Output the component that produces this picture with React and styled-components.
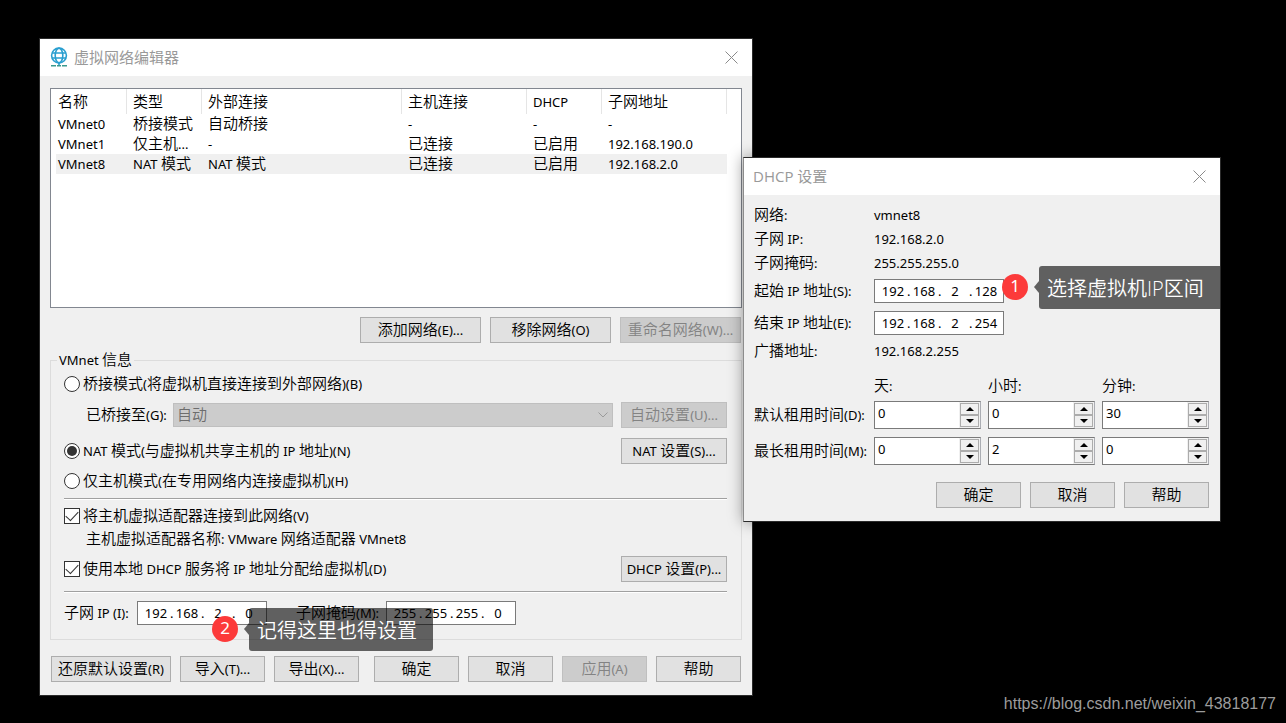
import * as React from 'react'
import styled, { createGlobalStyle, css } from 'styled-components'

const GlobalStyle = createGlobalStyle`
  * {
    box-sizing: border-box;
  }
  body {
    margin: 0;
    background: #000;
  }
  body, button, input, select {
    font-family: 'Noto Sans', 'Noto Sans CJK SC', sans-serif;
    font-size: 13px;
    line-height: 20px;
    color: #000;
  }
`

const Desktop = styled.main`
  position: relative;
  min-height: 100vh;
  overflow: hidden;
  background: #000;
`

const Window = styled.section`
  position: absolute;
  left: ${p => p.$left}px;
  top: ${p => p.$top}px;
  width: ${p => p.$width}px;
  border: 1px solid #2b2b2b;
  background: #f0f0f0;
  ${p =>
    p.$raised &&
    css`
      border-left-color: #8c8c8c;
      box-shadow: 0 0 14px rgba(0, 0, 0, 0.4);
    `};
`

const TitleBar = styled.header`
  display: flex;
  align-items: center;
  gap: 6px;
  height: 37px;
  padding: 0 14px 1px 9px;
  background: #fff;
`

const Title = styled.h1`
  flex: 1;
  margin: 0;
  font-family: 'Open Sans', 'Noto Sans CJK SC', sans-serif;
  font-size: 15px;
  font-weight: 400;
  line-height: 18px;
  color: #999;
`

const CloseButton = styled.button`
  display: flex;
  padding: 0;
  border: 0;
  background: none;
`

const Body = styled.div`
  display: flex;
  flex-direction: column;
  padding: ${p => p.$padding};
`

// Chinese runs are set a little larger than the latin interface font
const Han = styled.span`
  font-family: 'Noto Sans CJK SC', sans-serif;
  font-size: 15px;
  font-weight: 350;
  line-height: 1;
`

const Line = styled.span`
  white-space: pre;
`

const Text = ({ children }) => (
  <Line>
    {children
      .split(/([\u4e00-\u9fff]+)/)
      .map((part, i) => (i % 2 ? <Han key={i}>{part}</Han> : part))}
  </Line>
)

const Button = styled.button`
  display: flex;
  align-items: center;
  justify-content: center;
  flex: none;
  width: ${p => p.$width || 85}px;
  height: 26px;
  padding: 0;
  border: 1px solid #adadad;
  background: #e1e1e1;
  &:disabled {
    border-color: #bfbfbf;
    background: #ccc;
    color: #838383;
  }
`

const ButtonRow = styled.div`
  display: flex;
  justify-content: flex-end;
  gap: 9px;
  padding: 0 1px;
  margin-top: ${p => p.$top}px;
`

const ButtonGroup = styled.div`
  display: flex;
  gap: 9px;
  margin-right: auto;
`

const ListBox = styled.div`
  height: 220px;
  border: 1px solid #828790;
  background: #fff;
`

const Table = styled.table`
  width: 671px;
  margin-left: 5px;
  table-layout: fixed;
  border-collapse: separate;
  border-spacing: 0;
`

const HeadCell = styled.th`
  width: ${p => p.$width}px;
  height: 25px;
  padding: 0 0 0 6px;
  border-right: 1px solid #e5e5e5;
  text-align: left;
  font-weight: 400;
  line-height: 20px;
  &:first-child {
    padding-left: 2px;
  }
`

const Cell = styled.td`
  height: 20px;
  padding: 0 0 0 6px;
  line-height: 20px;
  white-space: nowrap;
  &:first-child {
    padding-left: 2px;
  }
`

const TableRow = styled.tr`
  background: ${p => (p.$selected ? '#f0f0f0' : 'transparent')};
`

const Group = styled.fieldset`
  min-width: 0;
  margin: 7px 0 0;
  padding: 0 14px 14px 13px;
  border: 1px solid #dcdcdc;
`

const Legend = styled.legend`
  height: 20px;
  margin-left: -7px;
  padding: 0 2px;
`

const Row = styled.div`
  display: flex;
  align-items: center;
  height: ${p => p.$height || 26}px;
  margin-top: ${p => p.$top || 0}px;
  padding-left: ${p => p.$indent || 0}px;
`

const FieldName = styled.span`
  width: ${p => p.$width}px;
  margin-left: ${p => p.$left || 0}px;
`

const Spacer = styled.div`
  flex: 1;
`

const Rule = styled.hr`
  height: 2px;
  margin: ${p => p.$top}px 0 0;
  border: 0;
  border-top: 1px solid #a0a0a0;
  background: #fff;
`

const Choice = styled.label`
  display: flex;
  align-items: center;
  gap: 3px;
`

const Radio = styled.input.attrs({ type: 'radio' })`
  appearance: none;
  display: grid;
  place-items: center;
  width: 16px;
  height: 16px;
  margin: 0;
  border: 1px solid #333;
  border-radius: 50%;
  background: #fff;
  &:checked::after {
    content: '';
    width: 10px;
    height: 10px;
    border-radius: 50%;
    background: #333;
  }
`

const Checkbox = styled.input.attrs({ type: 'checkbox' })`
  appearance: none;
  display: grid;
  place-items: center;
  width: 16px;
  height: 16px;
  margin: 0;
  border: 1px solid #333;
  background: #fff;
  &:checked::after {
    content: '';
    width: 11px;
    height: 6px;
    margin-bottom: 3px;
    border: solid #333;
    border-width: 0 0 1px 1px;
    transform: rotate(-47deg);
  }
`

const SelectBox = styled.div`
  position: relative;
  flex: none;
  width: 440px;
  margin: 0 8px 0 auto;
`

const Select = styled.select`
  appearance: none;
  display: block;
  width: 100%;
  height: 24px;
  padding: 0 3px 2px;
  border: 1px solid #bfbfbf;
  border-radius: 0;
  background: #ccc;
  font-family: 'Noto Sans CJK SC', sans-serif;
  font-size: 15px;
  font-weight: 350;
  &:disabled {
    color: #6d6d6d;
    opacity: 1;
  }
`

const SelectArrow = styled.svg`
  position: absolute;
  right: 5px;
  top: 9px;
`

const IpBox = styled.div`
  display: flex;
  align-items: center;
  width: 130px;
  height: 24px;
  padding-left: 5px;
  border: 1px solid #7a7a7a;
  background: #fff;
`

const Octet = styled.input`
  width: 26px;
  height: 20px;
  padding: 0 0 1px;
  border: 0;
  background: none;
  text-align: center;
`

const Dot = styled.span`
  width: 4px;
  margin-left: 1px;
  padding-bottom: 1px;
`

const IpField = ({ label, value }) => (
  <IpBox role="group" aria-label={label}>
    {value.split('.').map((octet, i) => (
      <React.Fragment key={i}>
        {i > 0 && <Dot>.</Dot>}
        <Octet aria-label={`${label} ${i + 1}`} defaultValue={octet} />
      </React.Fragment>
    ))}
  </IpBox>
)

const InfoRow = styled.div`
  display: grid;
  grid-template-columns: 120px 1fr;
  align-items: center;
  height: 24px;
  margin-top: ${p => p.$top || 0}px;
`

const LeaseGrid = styled.div`
  display: grid;
  grid-template-columns: 113px repeat(3, 107px);
  column-gap: 7px;
  align-items: center;
  height: ${p => p.$height}px;
  margin-top: ${p => p.$top}px;
`

const SpinBox = styled.div`
  display: flex;
  height: 28px;
  border: 1px solid #7a7a7a;
  border-right-color: #abadb3;
  background: #fff;
`

const SpinInput = styled.input`
  flex: 1;
  min-width: 0;
  padding: 0 0 5px 3px;
  border: 0;
  background: none;
`

const SpinButtons = styled.div`
  display: flex;
  flex-direction: column;
  width: 21px;
  padding: 1px;
  background: #f0f0f0;
`

const SpinButton = styled.button`
  display: flex;
  flex: 1;
  align-items: center;
  justify-content: center;
  padding: 0;
  border: 1px solid #acacac;
  background: #f0f0f0;
`

const SpinField = ({ label, value }) => (
  <SpinBox>
    <SpinInput aria-label={label} defaultValue={value} />
    <SpinButtons>
      <SpinButton aria-label={`${label} +`}>
        <svg width="8" height="4" viewBox="0 0 8 4">
          <path d="M0 4L4 0L8 4Z" />
        </svg>
      </SpinButton>
      <SpinButton aria-label={`${label} -`}>
        <svg width="8" height="4" viewBox="0 0 8 4">
          <path d="M0 0L4 4L8 0Z" />
        </svg>
      </SpinButton>
    </SpinButtons>
  </SpinBox>
)

const Callout = styled.div`
  position: absolute;
  left: ${p => p.$left}px;
  top: ${p => p.$top}px;
  display: flex;
  align-items: center;
  color: #fff;
`

const Marker = styled.span`
  width: 26px;
  height: 26px;
  margin: 0 6px 1px 0;
  border-radius: 50%;
  background: #fc3a3a;
  font-size: 17px;
  line-height: 24px;
  text-align: center;
`

const Pointer = styled.span`
  margin-bottom: 1px;
  border: solid transparent;
  border-width: 6px 5px 6px 0;
  border-right-color: rgba(0, 0, 0, 0.6);
`

const Bubble = styled.span`
  height: 43px;
  padding: 0 16px 0 8px;
  border-radius: ${p => (p.$flat ? '3px 0 0 3px' : '3px')};
  background: rgba(0, 0, 0, 0.6);
  font-family: 'Open Sans', 'Noto Sans CJK SC', sans-serif;
  font-size: 20px;
  font-weight: 350;
  line-height: 45px;
  white-space: nowrap;
`

const Watermark = styled.footer`
  position: absolute;
  right: 10px;
  bottom: 9px;
  font-family: 'Liberation Sans', Arial, sans-serif;
  font-size: 16px;
  color: #9c9c9c;
`

const GlobeIcon = () => (
  <svg width="19" height="20" viewBox="0 0 19 20" fill="none" stroke="#2a9fd0" strokeWidth="1.6">
    <circle cx="10" cy="8.5" r="7.4" />
    <ellipse cx="10" cy="8.5" rx="3.8" ry="7.4" />
    <path d="M3 6h14M3 11h14M10 16v2" />
    <path d="M2 18.7h5M8 18.7h4M13 18.7h5" stroke="#3a9a90" />
  </svg>
)

const Close = () => (
  <CloseButton aria-label="关闭">
    <svg width="13" height="13" viewBox="0 0 13 13" stroke="#8a8a8a" strokeWidth="1">
      <path d="M0.5 0.5L12.5 12.5M12.5 0.5L0.5 12.5" />
    </svg>
  </CloseButton>
)

const columns = [
  ['名称', 71],
  ['类型', 75],
  ['外部连接', 200],
  ['主机连接', 125],
  ['DHCP', 75],
  ['子网地址', 125]
]

const networks = [
  ['VMnet0', '桥接模式', '自动桥接', '-', '-', '-'],
  ['VMnet1', '仅主机...', '-', '已连接', '已启用', '192.168.190.0'],
  ['VMnet8', 'NAT 模式', 'NAT 模式', '已连接', '已启用', '192.168.2.0']
]

const NetworkEditor = () => (
  <Window $left={39} $top={38} $width={714}>
    <TitleBar>
      <GlobeIcon />
      <Title>虚拟网络编辑器</Title>
      <Close />
    </TitleBar>
    <Body $padding="12px 10px 13px">
      <ListBox>
        <Table>
          <thead>
            <tr>
              {columns.map(([name, width]) => (
                <HeadCell key={name} $width={width}>
                  <Text>{name}</Text>
                </HeadCell>
              ))}
            </tr>
          </thead>
          <tbody>
            {networks.map(row => (
              <TableRow key={row[0]} $selected={row[0] === 'VMnet8'}>
                {row.map((value, i) => (
                  <Cell key={i}>
                    <Text>{value}</Text>
                  </Cell>
                ))}
              </TableRow>
            ))}
          </tbody>
        </Table>
      </ListBox>
      <ButtonRow $top={9}>
        <Button $width={121}>
          <Text>添加网络(E)...</Text>
        </Button>
        <Button $width={121}>
          <Text>移除网络(O)</Text>
        </Button>
        <Button $width={121} disabled>
          <Text>重命名网络(W)...</Text>
        </Button>
      </ButtonRow>
      <Group>
        <Legend>
          <Text>VMnet 信息</Text>
        </Legend>
        <Row $height={28}>
          <Choice>
            <Radio name="mode" />
            <Text>桥接模式(将虚拟机直接连接到外部网络)(B)</Text>
          </Choice>
        </Row>
        <Row $top={4} $indent={22}>
          <label htmlFor="bridge">
            <Text>已桥接至(G):</Text>
          </label>
          <SelectBox>
            <Select id="bridge" disabled>
              <option>自动</option>
            </Select>
            <SelectArrow width="10" height="6" viewBox="0 0 10 6" fill="none" stroke="#9a9a9a">
              <path d="M0.5 0.5L5 5L9.5 0.5" />
            </SelectArrow>
          </SelectBox>
          <Button $width={106} disabled>
            <Text>自动设置(U)...</Text>
          </Button>
        </Row>
        <Row $top={10}>
          <Choice>
            <Radio name="mode" defaultChecked />
            <Text>NAT 模式(与虚拟机共享主机的 IP 地址)(N)</Text>
          </Choice>
          <Spacer />
          <Button $width={106}>
            <Text>NAT 设置(S)...</Text>
          </Button>
        </Row>
        <Row $top={5} $height={24}>
          <Choice>
            <Radio name="mode" />
            <Text>仅主机模式(在专用网络内连接虚拟机)(H)</Text>
          </Choice>
        </Row>
        <Rule $top={5} />
        <Row $top={6} $height={20}>
          <Choice>
            <Checkbox defaultChecked />
            <Text>将主机虚拟适配器连接到此网络(V)</Text>
          </Choice>
        </Row>
        <Row $top={3} $height={20} $indent={22}>
          <Text>主机虚拟适配器名称: VMware 网络适配器 VMnet8</Text>
        </Row>
        <Row $top={7}>
          <Choice>
            <Checkbox defaultChecked />
            <Text>使用本地 DHCP 服务将 IP 地址分配给虚拟机(D)</Text>
          </Choice>
          <Spacer />
          <Button $width={106}>
            <Text>DHCP 设置(P)...</Text>
          </Button>
        </Row>
        <Rule $top={9} />
        <Row $top={8} $height={24}>
          <FieldName $width={73}>
            <Text>子网 IP (I):</Text>
          </FieldName>
          <IpField label="子网 IP" value="192.168.2.0" />
          <FieldName $width={90} $left={29}>
            <Text>子网掩码(M):</Text>
          </FieldName>
          <IpField label="子网掩码" value="255.255.255.0" />
        </Row>
      </Group>
      <ButtonRow $top={16}>
        <ButtonGroup>
          <Button $width={120}>
            <Text>还原默认设置(R)</Text>
          </Button>
          <Button>
            <Text>导入(T)...</Text>
          </Button>
          <Button>
            <Text>导出(X)...</Text>
          </Button>
        </ButtonGroup>
        <Button>
          <Text>确定</Text>
        </Button>
        <Button>
          <Text>取消</Text>
        </Button>
        <Button disabled>
          <Text>应用(A)</Text>
        </Button>
        <Button>
          <Text>帮助</Text>
        </Button>
      </ButtonRow>
    </Body>
  </Window>
)

const units = ['天', '小时', '分钟']

const Lease = ({ label, values, top }) => (
  <LeaseGrid $top={top} $height={28}>
    <Text>{label}</Text>
    {values.map((value, i) => (
      <SpinField key={i} label={`${label} ${units[i]}`} value={value} />
    ))}
  </LeaseGrid>
)

const DhcpSettings = () => (
  <Window $left={743} $top={157} $width={478} $raised>
    <TitleBar>
      <Title>DHCP 设置</Title>
      <Close />
    </TitleBar>
    <Body $padding="8px 10px 13px">
      <InfoRow>
        <Text>网络:</Text>
        <Text>vmnet8</Text>
      </InfoRow>
      <InfoRow>
        <Text>子网 IP:</Text>
        <Text>192.168.2.0</Text>
      </InfoRow>
      <InfoRow>
        <Text>子网掩码:</Text>
        <Text>255.255.255.0</Text>
      </InfoRow>
      <InfoRow $top={4}>
        <Text>起始 IP 地址(S):</Text>
        <IpField label="起始 IP 地址" value="192.168.2.128" />
      </InfoRow>
      <InfoRow $top={8}>
        <Text>结束 IP 地址(E):</Text>
        <IpField label="结束 IP 地址" value="192.168.2.254" />
      </InfoRow>
      <InfoRow $top={4}>
        <Text>广播地址:</Text>
        <Text>192.168.2.255</Text>
      </InfoRow>
      <LeaseGrid $top={13} $height={20}>
        <span />
        {units.map(unit => (
          <Text key={unit}>{`${unit}:`}</Text>
        ))}
      </LeaseGrid>
      <Lease label="默认租用时间(D):" values={['0', '0', '30']} top={5} />
      <Lease label="最长租用时间(M):" values={['0', '2', '0']} top={8} />
      <ButtonRow $top={17}>
        <Button>
          <Text>确定</Text>
        </Button>
        <Button>
          <Text>取消</Text>
        </Button>
        <Button>
          <Text>帮助</Text>
        </Button>
      </ButtonRow>
    </Body>
  </Window>
)

const App = () => (
  <Desktop>
    <GlobalStyle />
    <NetworkEditor />
    <DhcpSettings />
    <Callout $left={1002} $top={266}>
      <Marker>1</Marker>
      <Pointer />
      <Bubble $flat>选择虚拟机IP区间</Bubble>
    </Callout>
    <Callout $left={212} $top={608}>
      <Marker>2</Marker>
      <Pointer />
      <Bubble>记得这里也得设置</Bubble>
    </Callout>
    <Watermark>https://blog.csdn.net/weixin_43818177</Watermark>
  </Desktop>
)

export default App
